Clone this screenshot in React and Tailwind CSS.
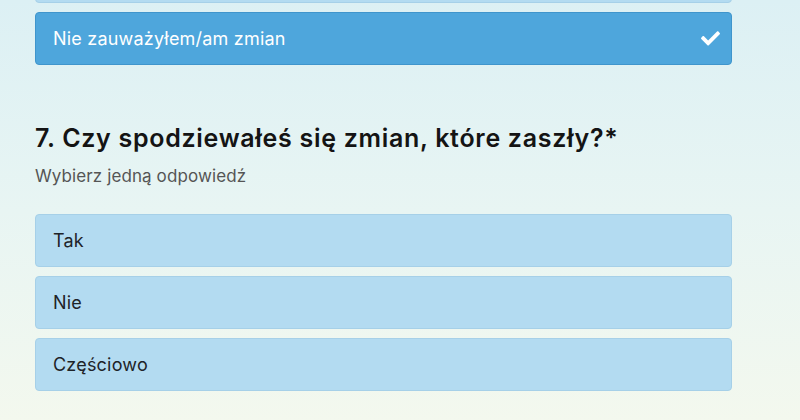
import React, { useState } from "react";

const options = ["Tak", "Nie", "Częściowo"];

const CheckIcon = () => (
  <svg viewBox="0 60 512 400" className="w-[19px] h-[15px]" fill="white">
    <path d="M173.9 439.4l-166.4-166.4c-10-10-10-26.2 0-36.2l36.2-36.2c10-10 26.2-10 36.2 0L192 312.7 432.1 72.6c10-10 26.2-10 36.2 0l36.2 36.2c10 10 10 26.2 0 36.2l-294.4 294.4c-10 10-26.2 10-36.2 0z" />
  </svg>
);

const Option = ({ label, selected, onClick }) => (
  <button
    onClick={onClick}
    className={
      selected
        ? "flex items-center justify-between w-full h-[53px] pl-[17px] pr-[11px] rounded-[4px] border border-[#3f95cc] bg-[#4ea6dc] text-white text-left"
        : "flex items-center justify-between w-full h-[53px] pl-[17px] pr-[11px] rounded-[4px] border border-[#a6d0e8] bg-[#b3dbf1] text-[#1e2328] text-left"
    }
  >
    <span className="text-[18px] tracking-[0.2px]">{label}</span>
    {selected && <CheckIcon />}
  </button>
);

export default function App() {
  const [answer, setAnswer] = useState(null);

  return (
    <div
      className="w-[800px] h-[420px] overflow-hidden bg-gradient-to-b from-[#dcf0f4] via-[#e8f5f3] to-[#f3f8ee]"
      style={{ fontFamily: 'Inter, "Liberation Sans", Arial, sans-serif' }}
    >
      <div className="w-[697px] ml-[35px] -mt-[50px]">
        {/* previous question, tail end */}
        <div className="flex flex-col gap-[9px]">
          <Option label="" selected={false} />
          <Option label="Nie zauważyłem/am zmian" selected={true} />
        </div>

        {/* Question 7 */}
        <h2 className="mt-[58px] text-[25px] leading-[30px] font-semibold tracking-[0.7px] text-[#141414]">
          7. Czy spodziewałeś się zmian, które zaszły?*
        </h2>
        <p className="mt-[13px] text-[17px] leading-[20px] tracking-[0.1px] text-[#555]">
          Wybierz jedną odpowiedź
        </p>

        <div className="mt-[28px] flex flex-col gap-[9px]">
          {options.map((o) => (
            <Option
              key={o}
              label={o}
              selected={answer === o}
              onClick={() => setAnswer(o)}
            />
          ))}
        </div>
      </div>
    </div>
  );
}
